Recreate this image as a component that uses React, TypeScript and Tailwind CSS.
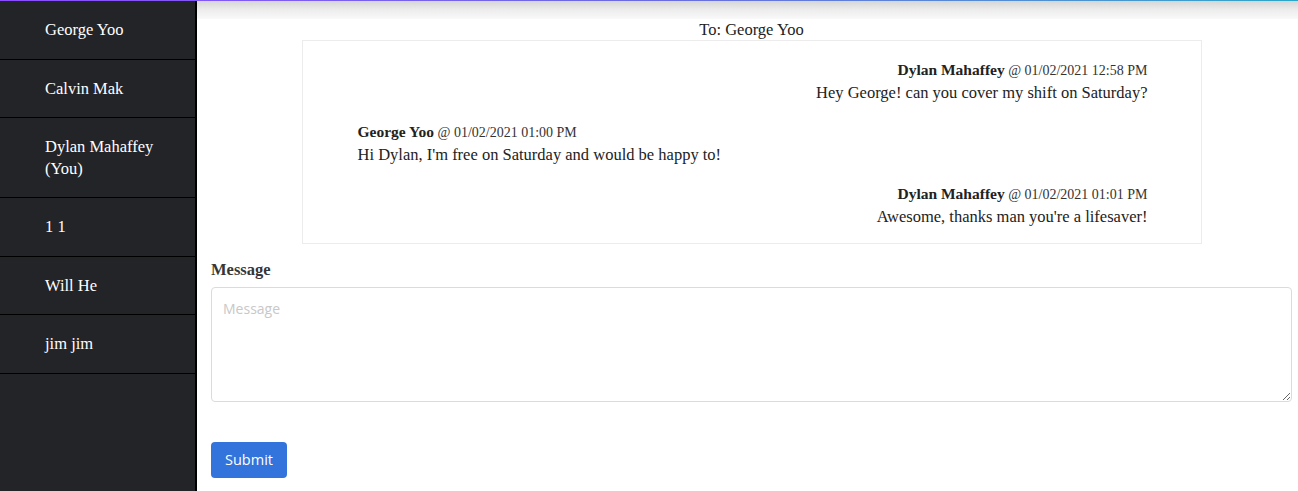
import React from 'react';

interface Msg {
  from: string;
  at: string;
  text: string;
  mine: boolean;
}

const CONTACTS = ['George Yoo', 'Calvin Mak', 'Dylan Mahaffey (You)', '1 1', 'Will He', 'jim jim'];

const MESSAGES: Msg[] = [
  { from: 'Dylan Mahaffey', at: '01/02/2021 12:58 PM', text: 'Hey George! can you cover my shift on Saturday?', mine: true },
  { from: 'George Yoo', at: '01/02/2021 01:00 PM', text: "Hi Dylan, I'm free on Saturday and would be happy to!", mine: false },
  { from: 'Dylan Mahaffey', at: '01/02/2021 01:01 PM', text: "Awesome, thanks man you're a lifesaver!", mine: true },
];

const serif = "font-['Liberation_Serif',serif]";

export default function App() {
  return (
    <div className={`min-h-screen bg-white text-[#222] ${serif}`}>
      {/* top accent line */}
      <div className="h-px bg-gradient-to-r from-[#8b4dff] via-[#6a6ae0] to-[#2aa6c8]" />

      <div className="flex min-h-[490px]">
        {/* Sidebar */}
        <aside className="w-[197px] shrink-0 bg-[#232428] border-r-2 border-black">
          {CONTACTS.map(name => (
            <div
              key={name}
              className="border-b border-black pl-[45px] pr-6 py-[18px] text-[16.5px] leading-[21.5px] text-white"
            >
              {name}
            </div>
          ))}
        </aside>

        {/* Main */}
        <main className="flex-1 flex flex-col">
          <div className="h-[18px] bg-gradient-to-b from-[#d6d6d6] via-[#ededed] to-[#f9f9f9]" />

          <div className="pl-[14px] pr-[6px]">
            <div className="pt-px text-center text-[16.5px] leading-[20px] text-[#222]">To: George Yoo</div>

            <div className="mx-auto w-[900px] border border-[#ececec] px-[53px] pt-[18px] pb-[16px]">
              {MESSAGES.map((m, i) => (
                <div key={i} className={`mb-[18px] last:mb-0 ${m.mine ? 'text-right' : 'text-left pl-[2px]'}`}>
                  <div className="leading-[22px]">
                    <span className="font-bold text-[15.5px] text-[#222]">{m.from}</span>
                    <span className="text-[14px] text-[#333]"> @ {m.at}</span>
                  </div>
                  <div className="text-[16.5px] leading-[21px] text-[#222]">{m.text}</div>
                </div>
              ))}
            </div>

            <form className="mt-[15px]" onSubmit={e => e.preventDefault()}>
              <label className="block text-[16.5px] font-bold leading-[22px] text-[#363636]">Message</label>
              <textarea
                placeholder="Message"
                className="mt-[6px] block h-[115px] w-full rounded-[4px] border border-[#dbdbdb] px-[11px] py-[10px] font-['Open_Sans',sans-serif] text-[14px] text-[#363636] placeholder:text-[#c8c8c8] outline-none"
              />
              <button
                type="submit"
                className="mt-[40px] h-[36px] w-[76px] rounded-[4px] bg-[#3273dc] font-['Open_Sans',sans-serif] text-[14.5px] text-white"
              >
                Submit
              </button>
            </form>
          </div>
        </main>
      </div>
    </div>
  );
}
